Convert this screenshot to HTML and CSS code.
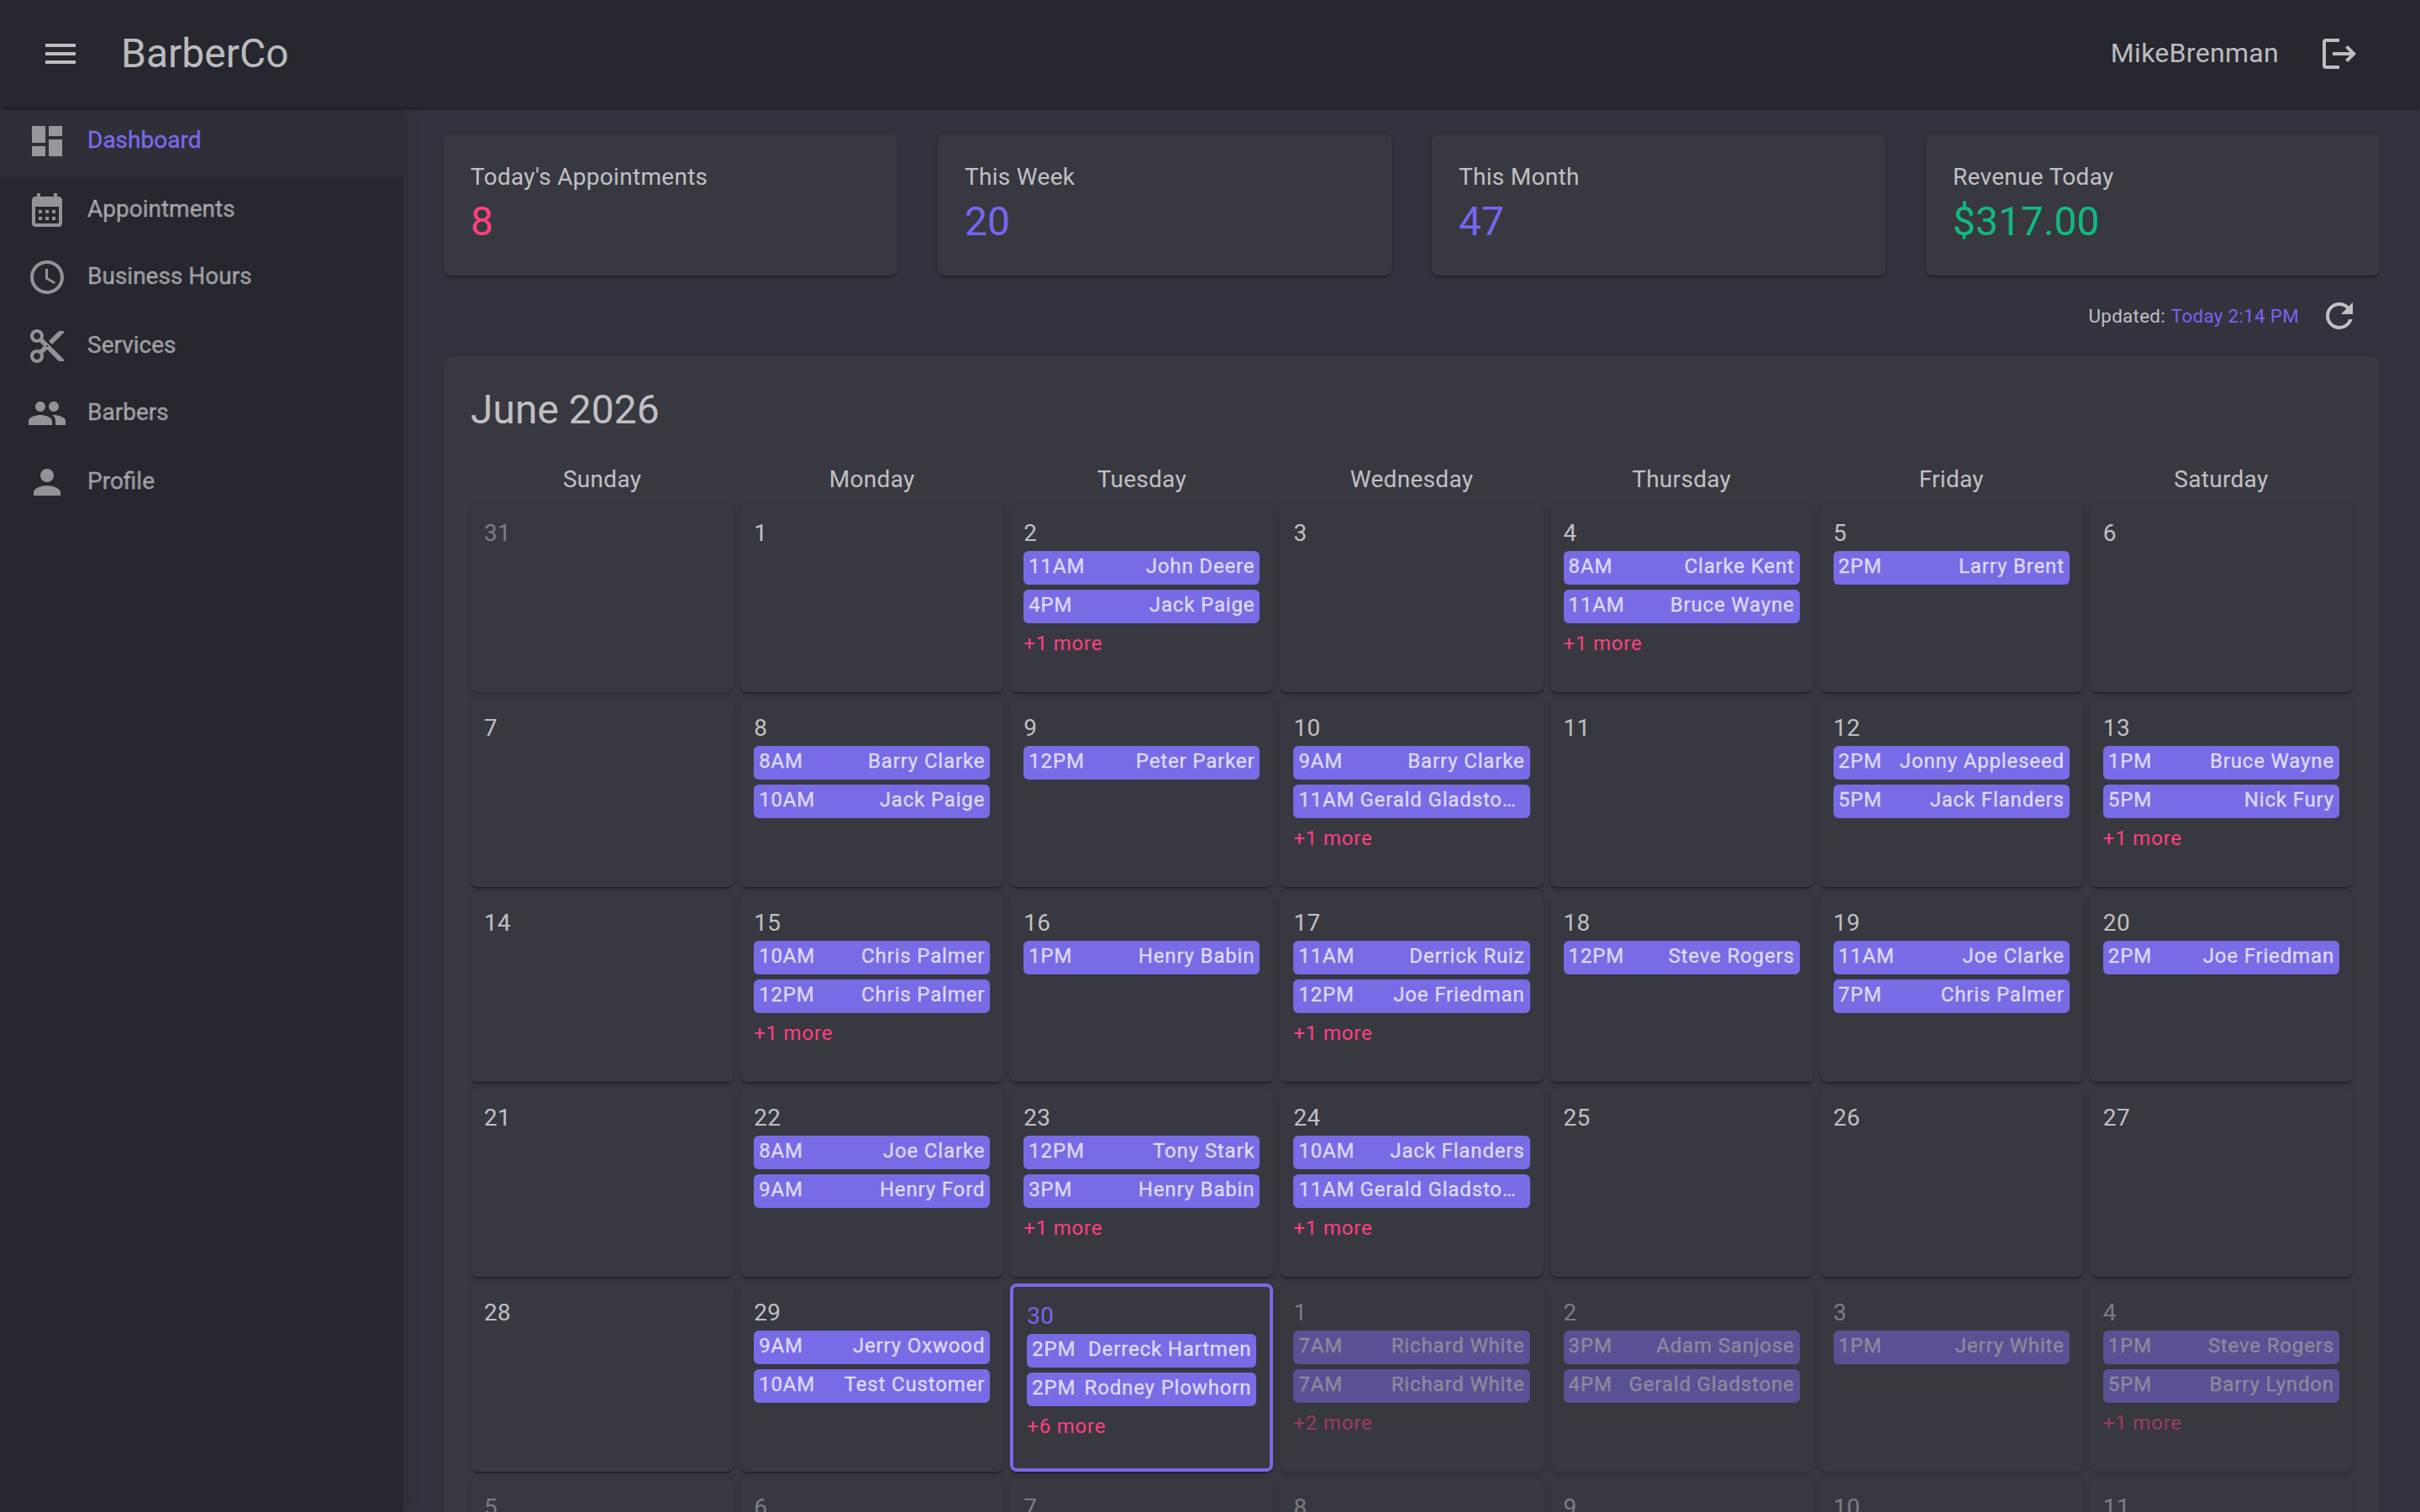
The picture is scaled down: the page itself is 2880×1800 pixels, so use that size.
FILE: index.html
```html
<!DOCTYPE html>
<html lang="en">
<head>
  <meta charset="UTF-8" />
  <meta name="viewport" content="width=device-width, initial-scale=1" />
  <title>BarberCo</title>
  <link rel="stylesheet" href="styles.css">
</head>
<body>

  <header class="topbar">
    <svg class="icon menu" viewBox="0 0 24 24"><path d="M3 18h18v-2H3v2zm0-5h18v-2H3v2zm0-7v2h18V6H3z"/></svg>
    <h1>BarberCo</h1>
    <span class="user">MikeBrenman</span>
    <svg class="icon logout" viewBox="0 0 24 24"><path d="M12 3H4a2 2 0 0 0-2 2v14a2 2 0 0 0 2 2h8v-2H4V5h8zM17 7l-1.410 1.410L18.170 11H8v2h10.170l-2.580 2.580L17 17l5-5z"/></svg>
  </header>

  <div class="layout">
    <nav class="sidebar">
      <a class="item active"><svg class="icon" viewBox="0 0 24 24"><path d="M3 13h8V3H3v10zm0 8h8v-6H3v6zm10 0h8V11h-8v10zm0-18v6h8V3h-8z"/></svg><span>Dashboard</span></a>
      <a class="item"><svg class="icon" viewBox="0 0 24 24"><path d="M19 4h-1V2h-2v2H8V2H6v2H5c-1.110 0-1.990.9-1.990 2L3 20c0 1.100.890 2 2 2h14c1.100 0 2-.9 2-2V6c0-1.100-.9-2-2-2zm0 16H5V10h14v10zM9 14H7v-2h2v2zm4 0h-2v-2h2v2zm4 0h-2v-2h2v2zm-8 4H7v-2h2v2zm4 0h-2v-2h2v2zm4 0h-2v-2h2v2z"/></svg><span>Appointments</span></a>
      <a class="item"><svg class="icon" viewBox="0 0 24 24"><path d="M11.990 2C6.470 2 2 6.480 2 12s4.470 10 9.990 10C17.520 22 22 17.520 22 12S17.520 2 11.990 2zM12 20c-4.420 0-8-3.580-8-8s3.580-8 8-8 8 3.580 8 8-3.580 8-8 8zm.5-13H11v6l5.250 3.150.750-1.230-4.500-2.670z"/></svg><span>Business Hours</span></a>
      <a class="item"><svg class="icon" viewBox="0 0 24 24"><path d="M9.640 7.640c.230-.5.360-1.050.360-1.640 0-2.210-1.790-4-4-4S2 3.790 2 6s1.790 4 4 4c.590 0 1.140-.130 1.640-.360L10 12l-2.360 2.360C7.140 14.130 6.590 14 6 14c-2.210 0-4 1.790-4 4s1.790 4 4 4 4-1.790 4-4c0-.590-.130-1.140-.360-1.640L12 14l7 7h3v-1L9.640 7.640zM6 8c-1.100 0-2-.890-2-2s.9-2 2-2 2 .890 2 2-.9 2-2 2zm0 12c-1.100 0-2-.890-2-2s.9-2 2-2 2 .890 2 2-.9 2-2 2zm6-7.500c-.280 0-.5-.220-.5-.5s.220-.5.5-.5.5.220.5.5-.220.5-.5.5zM19 3l-6 6 2 2 7-7V3z"/></svg><span>Services</span></a>
      <a class="item"><svg class="icon" viewBox="0 0 24 24"><path d="M16 11c1.660 0 2.990-1.340 2.990-3S17.660 5 16 5c-1.660 0-3 1.340-3 3s1.340 3 3 3zm-8 0c1.660 0 2.990-1.340 2.990-3S9.660 5 8 5C6.340 5 5 6.340 5 8s1.340 3 3 3zm0 2c-2.330 0-7 1.170-7 3.500V19h14v-2.500c0-2.330-4.670-3.500-7-3.500zm8 0c-.290 0-.620.020-.970.050 1.160.840 1.970 1.970 1.970 3.450V19h6v-2.500c0-2.330-4.670-3.500-7-3.500z"/></svg><span>Barbers</span></a>
      <a class="item"><svg class="icon" viewBox="0 0 24 24"><path d="M12 12c2.210 0 4-1.790 4-4s-1.790-4-4-4-4 1.790-4 4 1.790 4 4 4zm0 2c-2.670 0-8 1.340-8 4v2h16v-2c0-2.660-5.330-4-8-4z"/></svg><span>Profile</span></a>
    </nav>

    <main>
      <section class="stats">
        <div class="card stat"><h2>Today's Appointments</h2><p class="pink">8</p></div>
        <div class="card stat"><h2>This Week</h2><p class="purple">20</p></div>
        <div class="card stat"><h2>This Month</h2><p class="purple">47</p></div>
        <div class="card stat"><h2>Revenue Today</h2><p class="green">$317.00</p></div>
      </section>

      <div class="updated">
        <span>Updated: <b class="purple">Today 2:14 PM</b></span>
        <svg class="icon" viewBox="0 0 24 24"><path d="M17.650 6.350C16.200 4.900 14.210 4 12 4c-4.420 0-7.990 3.580-7.990 8s3.570 8 7.990 8c3.730 0 6.840-2.550 7.730-6h-2.080c-.820 2.330-3.040 4-5.650 4-3.310 0-6-2.690-6-6s2.690-6 6-6c1.660 0 3.140.690 4.220 1.780L13 11h7V4l-2.350 2.350z"/></svg>
      </div>

      <section class="card calendar">
        <h2>June 2026</h2>
        <div class="weekdays">
          <span>Sunday</span><span>Monday</span><span>Tuesday</span><span>Wednesday</span><span>Thursday</span><span>Friday</span><span>Saturday</span>
        </div>
        <div class="days" id="days"></div>
      </section>
    </main>
  </div>

  <script>
    // Appointments by offset from Sunday, May 31
    const citas = {
      2: [['11AM', 'John Deere'], ['4PM', 'Jack Paige'], 1],
      4: [['8AM', 'Clarke Kent'], ['11AM', 'Bruce Wayne'], 1],
      5: [['2PM', 'Larry Brent']],
      8: [['8AM', 'Barry Clarke'], ['10AM', 'Jack Paige']],
      9: [['12PM', 'Peter Parker']],
      10: [['9AM', 'Barry Clarke'], ['11AM', 'Gerald Gladstone'], 1],
      12: [['2PM', 'Jonny Appleseed'], ['5PM', 'Jack Flanders']],
      13: [['1PM', 'Bruce Wayne'], ['5PM', 'Nick Fury'], 1],
      15: [['10AM', 'Chris Palmer'], ['12PM', 'Chris Palmer'], 1],
      16: [['1PM', 'Henry Babin']],
      17: [['11AM', 'Derrick Ruiz'], ['12PM', 'Joe Friedman'], 1],
      18: [['12PM', 'Steve Rogers']],
      19: [['11AM', 'Joe Clarke'], ['7PM', 'Chris Palmer']],
      20: [['2PM', 'Joe Friedman']],
      22: [['8AM', 'Joe Clarke'], ['9AM', 'Henry Ford']],
      23: [['12PM', 'Tony Stark'], ['3PM', 'Henry Babin'], 1],
      24: [['10AM', 'Jack Flanders'], ['11AM', 'Gerald Gladstone'], 1],
      29: [['9AM', 'Jerry Oxwood'], ['10AM', 'Test Customer']],
      30: [['2PM', 'Derreck Hartmen'], ['2PM', 'Rodney Plowhorn'], 6],
      31: [['7AM', 'Richard White'], ['7AM', 'Richard White'], 2],
      32: [['3PM', 'Adam Sanjose'], ['4PM', 'Gerald Gladstone']],
      33: [['1PM', 'Jerry White']],
      34: [['1PM', 'Steve Rogers'], ['5PM', 'Barry Lyndon'], 1]
    };

    function crear(tag, clase, texto) {
      const el = document.createElement(tag);
      el.className = clase;
      if (texto !== undefined) el.textContent = texto;
      return el;
    }

    const days = document.getElementById('days');
    for (let i = 0; i < 42; i++) {
      const fecha = new Date(2026, 4, 31 + i);
      const celda = crear('div', 'day');
      if (fecha.getMonth() !== 5) celda.classList.add('outside');
      if (i === 30) celda.classList.add('today');
      celda.appendChild(crear('div', 'num', fecha.getDate()));

      (citas[i] || []).forEach(c => {
        if (typeof c === 'number') {
          celda.appendChild(crear('div', 'more', `+${c} more`));
          return;
        }
        const cita = crear('div', 'event');
        cita.appendChild(crear('span', 'time', c[0]));
        cita.appendChild(crear('span', 'name', c[1]));
        celda.appendChild(cita);
      });
      days.appendChild(celda);
    }
  </script>

</body>
</html>
```
FILE: styles.css
```css
* {
  box-sizing: border-box;
}
body {
  margin: 0;
  height: 1800px;
  overflow: hidden;
  background-color: #33333d;
  color: rgba(255, 255, 255, 0.7);
  font-family: Roboto, "Liberation Sans", sans-serif;
  font-size: 28px;
  line-height: 40px;
  letter-spacing: 0.01071em;
}
h1, h2, p {
  margin: 0;
  font-weight: 400;
}
.icon {
  width: 48px;
  height: 48px;
  fill: currentColor;
  flex: none;
}
.pink { color: #ff4081; }
.purple { color: #7467ef; }
.green { color: #10b981; }

.topbar {
  position: relative;
  z-index: 2;
  display: flex;
  align-items: center;
  height: 128px;
  padding: 0 72px 0 48px;
  background-color: #27272f;
  box-shadow: 0 4px 2px -2px rgba(0, 0, 0, 0.2), 0 2px 2px rgba(0, 0, 0, 0.14), 0 2px 6px rgba(0, 0, 0, 0.12);
}
.topbar h1 {
  margin-left: 48px;
  font-size: 48px;
  line-height: 64px;
  letter-spacing: 0;
}
.user {
  margin-left: auto;
  margin-right: 48px;
  padding-bottom: 2px;
  font-size: 32px;
  letter-spacing: 0.00938em;
}

.layout {
  display: flex;
}
.sidebar {
  width: 480px;
  height: 1672px;
  flex: none;
  background-color: #27272f;
  box-shadow: 0 0 20px rgba(0, 0, 0, 0.15);
}
.item {
  display: flex;
  align-items: flex-start;
  gap: 24px;
  height: 80px;
  padding: 16px 32px 0;
  color: rgba(255, 255, 255, 0.5);
  letter-spacing: 0;
}
.item:nth-child(odd) {
  height: 82px;
}
.item span {
  margin-top: 3px;
  -webkit-text-stroke: 0.4px;
}
.item.active {
  background-color: #2f2f37;
  color: #786be8;
}
.item.active .icon {
  color: rgba(255, 255, 255, 0.5);
}

main {
  flex: 1;
  padding: 32px 48px 0;
}
.card {
  background-color: #383840;
  border-radius: 8px;
  box-shadow: 0 4px 2px -2px rgba(0, 0, 0, 0.2), 0 2px 2px rgba(0, 0, 0, 0.14), 0 2px 6px rgba(0, 0, 0, 0.12);
}
.stats {
  display: grid;
  grid-template-columns: repeat(4, 1fr);
  gap: 48px;
}
.stat {
  height: 168px;
  padding: 32px;
}
.stat h2 {
  margin-bottom: 2px;
  font-size: 28px;
  line-height: 38px;
}
.stat p {
  font-size: 48px;
  line-height: 64px;
  letter-spacing: 0;
}
.updated {
  display: flex;
  align-items: center;
  justify-content: flex-end;
  gap: 24px;
  height: 96px;
  padding-right: 24px;
  font-size: 22.4px;
}
.updated b {
  margin-left: 1px;
  font-weight: 400;
}

.calendar {
  height: 1600px;
  padding: 32px;
}
.calendar h2 {
  font-size: 48px;
  line-height: 64px;
  letter-spacing: 0;
}
.weekdays, .days {
  display: grid;
  grid-template-columns: repeat(7, minmax(0, 1fr));
  column-gap: 8px;
}
.weekdays {
  margin: 31px 0 9px;
  text-align: center;
}
.days {
  row-gap: 8px;
}
.day {
  height: 224px;
  padding: 16px;
  border-radius: 8px;
  background-color: #383840;
  box-shadow: 0 4px 2px -2px rgba(0, 0, 0, 0.2), 0 2px 2px rgba(0, 0, 0, 0.14), 0 2px 6px rgba(0, 0, 0, 0.12);
}
.outside {
  opacity: 0.5;
}
.today {
  border: 4px solid #786be6;
}
.today .num {
  color: #7467ef;
}
.num {
  height: 40px;
  line-height: 38px;
}
.event {
  display: flex;
  justify-content: space-between;
  height: 40px;
  margin-bottom: 6px;
  padding: 0 6px;
  border-radius: 6px;
  background-color: #786be6;
  font-size: 24px;
  line-height: 36px;
  letter-spacing: 0.85px;
  -webkit-text-stroke: 0.4px;
}
.name {
  overflow: hidden;
  white-space: nowrap;
  text-overflow: ellipsis;
}
.time {
  flex: none;
  margin-right: 6px;
}
.more {
  color: #ff4081;
  font-size: 24px;
  line-height: 36px;
  letter-spacing: 0.03333em;
}
```
